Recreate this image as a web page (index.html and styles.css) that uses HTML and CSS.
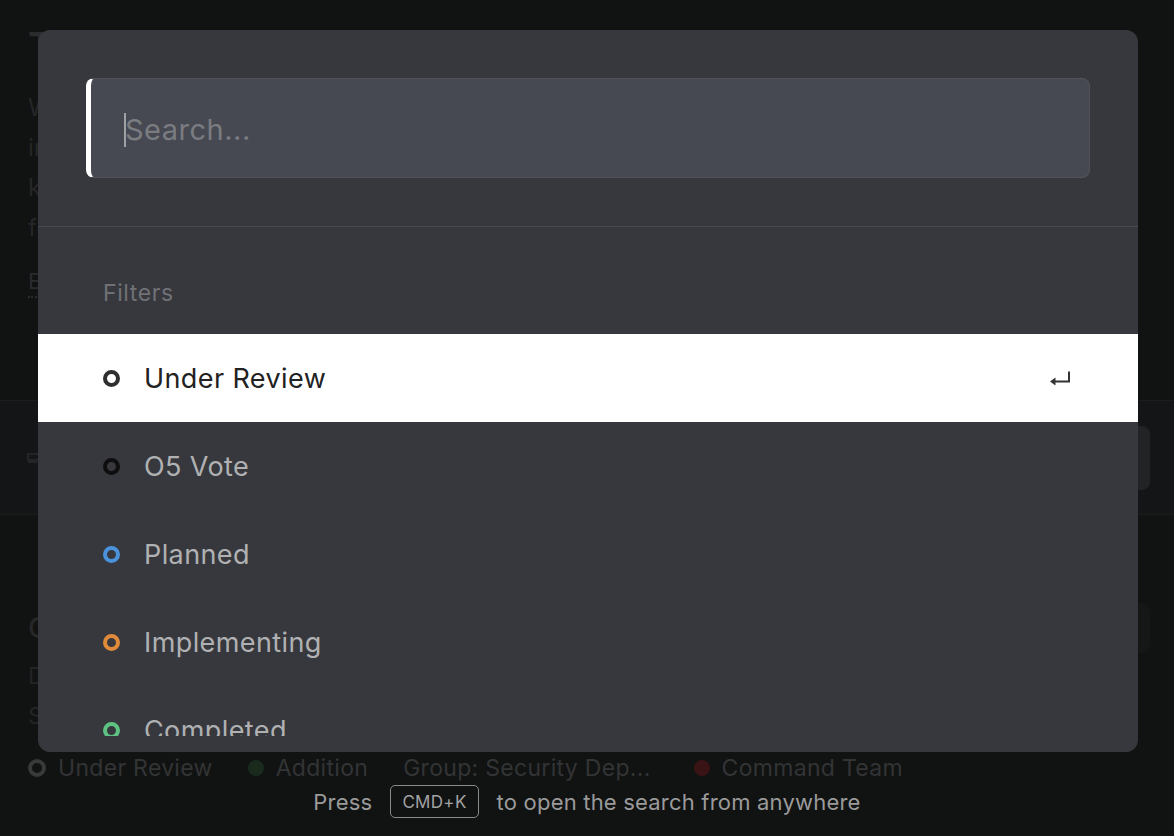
FILE: index.html
```html
<!DOCTYPE html>
<html lang="en">
<head>
<meta charset="utf-8">
<title>Search</title>
<link rel="stylesheet" href="styles.css">
</head>
<body>
<div class="page">
  <header class="intro">
    <h1 class="title">The Foundation Feedback Portal</h1>
    <p class="lead">Welcome to the feedback portal, where every proposal is tracked<br>
    in the open so that staff at every level can follow it and<br>
    know where it stands, and so that the council can weigh<br>
    feedback before any change is made.</p>
    <a class="more" href="#">Explore the board</a>
  </header>

  <div class="toolbar">
    <svg class="toolbar-icon" width="16" height="16" viewBox="0 0 16 16" fill="none" stroke="#2a2b2d" stroke-width="1.5"><path d="M2 4h9l3 3-3 3H2z"/><path d="M2 12h9"/></svg>
    <div class="toolbar-button"></div>
  </div>

  <section class="post">
    <div class="post-head">
      <h2 class="post-title">Containment Procedure Review</h2>
      <div class="vote-box"></div>
    </div>
    <p class="post-body">Detailed changes to the containment protocols for all sites,<br>
    Security staff are asked to review and comment before the vote.</p>
    <div class="tags">
      <span class="tag"><span class="tag-ring"></span>Under Review</span>
      <span class="tag"><span class="tag-dot green"></span>Addition</span>
      <span class="tag tag-group">Group: Security Dep...</span>
      <span class="tag"><span class="tag-dot red"></span>Command Team</span>
    </div>
  </section>
</div>

<div class="modal">
  <div class="search-wrap">
    <div class="search">
      <span class="caret"></span>
      <span class="placeholder">Search...</span>
    </div>
  </div>
  <div class="list">
    <div class="label">Filters</div>
    <div class="row active">
      <span class="ring ring-dark"></span>
      <span class="row-text">Under Review</span>
      <svg class="enter" width="22" height="16" viewBox="0 0 22 16"><path d="M20 1.5V11.5H6" fill="none" stroke="#333" stroke-width="2"/><path d="M1 11.5L6.5 7.5V15.5Z" fill="#333"/></svg>
    </div>
    <div class="row">
      <span class="ring ring-black"></span>
      <span class="row-text">O5 Vote</span>
    </div>
    <div class="row">
      <span class="ring ring-blue"></span>
      <span class="row-text">Planned</span>
    </div>
    <div class="row">
      <span class="ring ring-orange"></span>
      <span class="row-text">Implementing</span>
    </div>
    <div class="row">
      <span class="ring ring-green"></span>
      <span class="row-text">Completed</span>
    </div>
    <div class="row">
      <span class="ring ring-black"></span>
      <span class="row-text">Rejected</span>
    </div>
  </div>
</div>

<div class="hint">
  <span>Press</span>
  <kbd class="kbd">CMD+K</kbd>
  <span>to open the search from anywhere</span>
</div>
</body>
</html>
```

FILE: styles.css
```css
html, body {
  margin: 0;
  padding: 0;
  height: 100%;
}

body {
  background: #111212;
  font-family: Inter, "Noto Sans", "Liberation Sans", sans-serif;
  overflow: hidden;
  position: relative;
}

/* ---------- faint page behind the modal ---------- */
.page {
  padding: 22px 0 0 0;
}

.intro {
  padding: 0 24px 0 28px;
}

.title {
  margin: 0;
  font-size: 38px;
  line-height: 48px;
  font-weight: 600;
  color: #2b2c2d;
  white-space: nowrap;
}

.lead {
  margin: 18px 0 0 0;
  font-size: 24px;
  line-height: 40px;
  color: #252627;
  white-space: nowrap;
}

.more {
  display: inline-block;
  margin-top: 18px;
  font-size: 22px;
  line-height: 30px;
  color: #2a2b2c;
  text-decoration: none;
  border-bottom: 2px dotted #2a2b2c;
}

.toolbar {
  margin-top: 102px;
  height: 115px;
  box-sizing: border-box;
  border-top: 1px solid #1b1c1e;
  border-bottom: 1px solid #1b1c1e;
  background: #141517;
  display: flex;
  align-items: center;
  padding: 0 24px 0 26px;
}

.toolbar-icon {
  display: block;
}

.toolbar-button {
  margin-left: auto;
  width: 120px;
  height: 64px;
  border-radius: 8px;
  background: #222324;
}

.post {
  padding: 0 24px 0 28px;
}

.post-head {
  margin-top: 88px;
  display: flex;
  align-items: center;
}

.post-title {
  margin: 0;
  font-size: 29px;
  line-height: 40px;
  font-weight: 500;
  color: #262728;
  white-space: nowrap;
}

.vote-box {
  margin-left: auto;
  width: 60px;
  height: 50px;
  border-radius: 8px;
  background: #151616;
}

.post-body {
  margin: 3px 0 0 0;
  font-size: 23px;
  line-height: 40px;
  color: #232425;
  white-space: nowrap;
}

.tags {
  margin-top: 18px;
  display: flex;
  align-items: center;
  gap: 35px;
  font-size: 23px;
  letter-spacing: 0.3px;
  line-height: 28px;
  color: #333435;
  white-space: nowrap;
}

.tag {
  display: flex;
  align-items: center;
  gap: 12px;
}

.tag-group {
  margin-right: 8px;
}

.tag-ring {
  width: 18px;
  height: 18px;
  box-sizing: border-box;
  border: 4px solid #383939;
  border-radius: 50%;
}

.tag-dot {
  width: 16px;
  height: 16px;
  border-radius: 50%;
}

.tag-dot.green { background: #1a2a1d; }
.tag-dot.red { background: #3a1415; }

/* ---------- modal ---------- */
.modal {
  position: absolute;
  left: 38px;
  top: 30px;
  width: 1100px;
  height: 722px;
  box-sizing: border-box;
  padding-bottom: 16px;
  background: #37383d;
  border-radius: 12px;
  overflow: hidden;
  display: flex;
  flex-direction: column;
}

.search-wrap {
  padding: 48px;
  border-bottom: 1px solid #4a4b51;
}

.search {
  height: 100px;
  box-sizing: border-box;
  background: #464951;
  border: 1px solid #51545b;
  border-left: 5px solid #ffffff;
  border-radius: 8px;
  display: flex;
  align-items: center;
  padding: 3px 0 0 33px;
}

.caret {
  width: 2px;
  height: 34px;
  background: #9fa1a5;
}

.placeholder {
  font-size: 29px;
  letter-spacing: 0.5px;
  color: #7a7c81;
  margin-left: -1px;
}

.list {
  flex: 1;
  overflow: hidden;
}

.label {
  padding: 53px 0 0 65px;
  margin-bottom: 28px;
  font-size: 23px;
  letter-spacing: 0.6px;
  line-height: 26px;
  color: #6f7176;
}

.row {
  height: 88px;
  display: flex;
  align-items: center;
  gap: 24px;
  padding: 0 67px 0 65px;
  font-size: 27px;
  letter-spacing: 0.4px;
  color: #b0b1b3;
}

.row.active {
  background: #ffffff;
  color: #222222;
}

.ring {
  width: 17px;
  height: 17px;
  box-sizing: border-box;
  border: 4px solid;
  border-radius: 50%;
  flex: none;
}

.ring-dark { border-color: #2f2f30; }
.ring-black { border-color: #0e0e0f; }
.ring-blue { border-color: #4a92dc; }
.ring-orange { border-color: #e08a3c; }
.ring-green { border-color: #5ec283; }

.enter {
  margin-left: auto;
  display: block;
}

/* ---------- hint ---------- */
.hint {
  position: absolute;
  left: 0;
  right: 0;
  top: 784px;
  height: 35px;
  display: flex;
  align-items: center;
  justify-content: center;
  gap: 18px;
  font-size: 22px;
  letter-spacing: 0.2px;
  color: #9a9a9b;
}

.kbd {
  font-family: Inter, "Noto Sans", "Liberation Sans", sans-serif;
  font-size: 17px;
  color: #a2a2a3;
  border: 1.5px solid #8a8a8b;
  border-radius: 5px;
  padding: 0 11px;
  height: 33px;
  box-sizing: border-box;
  display: flex;
  align-items: center;
  letter-spacing: 0.3px;
}
```
